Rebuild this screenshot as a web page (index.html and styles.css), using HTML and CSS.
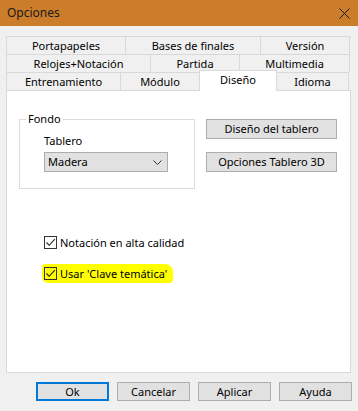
FILE: index.html
```html
<!DOCTYPE html>
<html lang="es">
  <head>
    <meta charset="UTF-8" />
    <meta name="viewport" content="width=device-width, initial-scale=1.0" />
    <title>Opciones</title>
    <link rel="stylesheet" href="styles.css">
  </head>
  <body>
    <div class="titlebar">
      <span class="title">Opciones</span>
      <svg class="close" width="11" height="11" viewBox="0 0 11 11">
        <path d="M0.5 0.5 L10.5 10.5 M10.5 0.5 L0.5 10.5" stroke="#1a1a1a" stroke-width="1" fill="none" />
      </svg>
    </div>

    <div class="dialog">
      <div class="tabs">
        <div class="tab-row">
          <div class="tab" style="width: 119px">Portapapeles</div>
          <div class="tab" style="width: 135px">Bases de finales</div>
          <div class="tab" style="width: 90px">Versión</div>
        </div>
        <div class="tab-row">
          <div class="tab" style="width: 144px">Relojes+Notación</div>
          <div class="tab" style="width: 89px">Partida</div>
          <div class="tab" style="width: 111px">Multimedia</div>
        </div>
        <div class="tab-row">
          <div class="tab" style="width: 114px">Entrenamiento</div>
          <div class="tab" style="width: 79px">Módulo</div>
          <div class="tab active" style="width: 78px">Diseño</div>
          <div class="tab" style="width: 73px">Idioma</div>
        </div>
      </div>

      <div class="panel">
        <div class="design-row">
          <fieldset class="group">
            <legend>Fondo</legend>
            <div class="group-body">
              <div class="field-label">Tablero</div>
              <div class="select">
                <span>Madera</span>
                <svg width="9" height="5" viewBox="0 0 9 5">
                  <path d="M0.5 0.5 L4.5 4.5 L8.5 0.5" stroke="#333" stroke-width="1" fill="none" />
                </svg>
              </div>
            </div>
          </fieldset>
          <div class="side-buttons">
            <button type="button" class="btn wide">Diseño del tablero</button>
            <button type="button" class="btn wide">Opciones Tablero 3D</button>
          </div>
        </div>

        <div class="checks">
          <label class="check">
            <span class="box">
              <svg width="11" height="11" viewBox="0 0 11 11">
                <path d="M1.5 5.5 L4.2 8.3 L9.8 2.2" stroke="#222" stroke-width="1.1" fill="none" />
              </svg>
            </span>
            Notación en alta calidad
          </label>
          <label class="check marked">
            <span class="box">
              <svg width="11" height="11" viewBox="0 0 11 11">
                <path d="M1.5 5.5 L4.2 8.3 L9.8 2.2" stroke="#222" stroke-width="1.1" fill="none" />
              </svg>
            </span>
            Usar 'Clave temática'
          </label>
        </div>
      </div>

      <div class="footer">
        <button type="button" class="btn foot default">Ok</button>
        <button type="button" class="btn foot">Cancelar</button>
        <button type="button" class="btn foot">Aplicar</button>
        <button type="button" class="btn foot">Ayuda</button>
      </div>
    </div>
  </body>
</html>
```

FILE: styles.css
```css
* {
  box-sizing: border-box;
}
body {
  margin: 0;
  width: 358px;
  height: 411px;
  overflow: hidden;
  background-color: #f0f0f0;
  font-family: "Noto Sans", "Open Sans", sans-serif;
  font-size: 11px;
  line-height: 16px;
  color: #000;
}
.titlebar {
  height: 26px;
  background-color: #cb7d2b;
  display: flex;
  align-items: center;
  justify-content: space-between;
  padding: 0 8px 0 7px;
  font-size: 12px;
}
.title {
  color: #1a1a1a;
}
.dialog {
  padding: 10px 0 0 6px;
}
.tabs {
  width: 344px;
}
.tab-row {
  display: flex;
  height: 18px;
}
.tab {
  display: flex;
  align-items: center;
  justify-content: center;
  border-top: 1px solid #d9d9d9;
  border-left: 1px solid #d9d9d9;
  white-space: nowrap;
}
.tab:last-child {
  border-right: 1px solid #d9d9d9;
}
.tab.active {
  background: white;
  margin-top: -2px;
  height: 21px;
  border-right: 1px solid #d9d9d9;
  margin-right: -1px;
  position: relative;
  z-index: 1;
  padding-bottom: 2px;
}
.panel {
  width: 345px;
  height: 283px;
  background: white;
  border: 1px solid #d9d9d9;
  padding: 20px 0 0 12px;
}
.design-row {
  display: flex;
  gap: 11px;
  align-items: flex-start;
}
.group {
  width: 176px;
  height: 78px;
  margin: 0;
  padding: 0 0 0 6px;
  border: 1px solid #dcdcdc;
}
.group legend {
  padding: 0 2px;
}
.group-body {
  margin-left: 18px;
  margin-top: 6px;
}
.field-label {
  margin-bottom: 3px;
}
.select {
  width: 124px;
  height: 20px;
  display: flex;
  align-items: center;
  justify-content: space-between;
  padding: 0 5px 0 3px;
  background-color: #e1e1e1;
  border: 1px solid #adadad;
}
.side-buttons {
  display: flex;
  flex-direction: column;
  gap: 13px;
  margin-top: 8px;
}
.btn {
  font-family: inherit;
  font-size: 11px;
  line-height: 16px;
  color: #000;
  background-color: #e1e1e1;
  border: 1px solid #adadad;
  border-radius: 0;
  padding: 0;
  margin: 0;
}
.btn.wide {
  width: 131px;
  height: 20px;
}
.checks {
  display: flex;
  flex-direction: column;
  gap: 13px;
  margin: 45px 0 0 23px;
}
.check {
  display: flex;
  align-items: center;
  gap: 3px;
  height: 17px;
  padding: 0 2px;
  align-self: flex-start;
}
.check.marked {
  background-color: #ffff00;
  border-radius: 3px 8px 4px 6px;
  height: 19px;
  padding-right: 6px;
}
.box {
  width: 13px;
  height: 13px;
  border: 1px solid #333;
  background: transparent;
  display: flex;
  align-items: center;
  justify-content: center;
}
.footer {
  display: flex;
  justify-content: flex-end;
  gap: 8px;
  padding-right: 6px;
  margin-top: 9px;
}
.btn.foot {
  width: 73px;
  height: 19px;
}
.btn.default {
  border: 2px solid #0078d7;
}
```
